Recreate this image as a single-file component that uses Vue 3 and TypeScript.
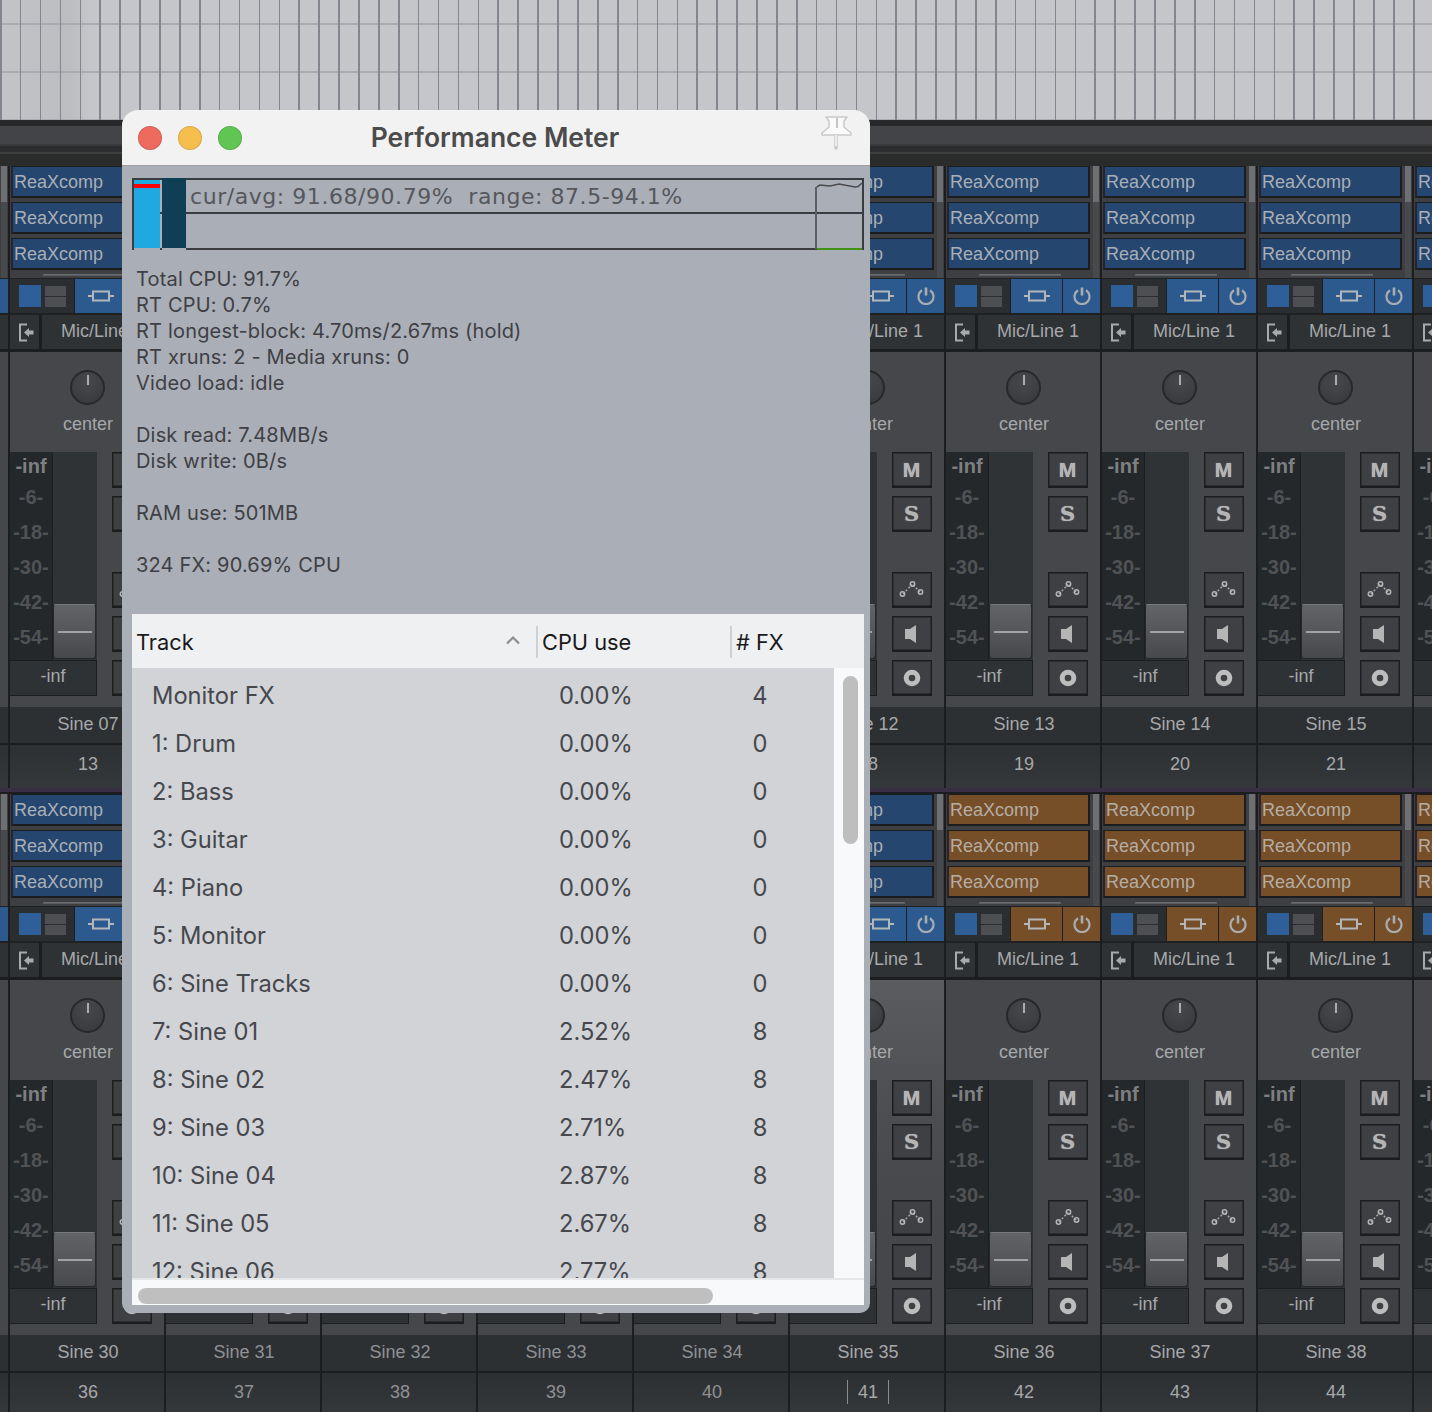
<script setup lang="ts">
interface Strip {
  name: string
  num: number
  brown: boolean
  dim: boolean
  sel: boolean
}

const pad = (n: number): string => String(n).padStart(2, '0')

function buildRow(first: number, brownFrom: number): Strip[] {
  const out: Strip[] = []
  for (let i = 0; i < 11; i++) {
    const n = first + i
    out.push({
      name: 'Sine ' + pad(n),
      num: n + 6,
      brown: n >= brownFrom,
      dim: n >= 31 && n <= 34,
      sel: n === 35,
    })
  }
  return out
}

const rows: Strip[][] = [buildRow(6, 999), buildRow(29, 36)]
const scale = ['-6-', '-18-', '-30-', '-42-', '-54-']
const meterText = 'cur/avg: 91.68/90.79%  range: 87.5-94.1%'

const stats: string[] = [
  'Total CPU: 91.7%',
  'RT CPU: 0.7%',
  'RT longest-block: 4.70ms/2.67ms (hold)',
  'RT xruns: 2 - Media xruns: 0',
  'Video load: idle',
  '',
  'Disk read: 7.48MB/s',
  'Disk write: 0B/s',
  '',
  'RAM use: 501MB',
  '',
  '324 FX: 90.69% CPU',
]

const tracks: [string, string, number][] = [
  ['Monitor FX', '0.00%', 4],
  ['1: Drum', '0.00%', 0],
  ['2: Bass', '0.00%', 0],
  ['3: Guitar', '0.00%', 0],
  ['4: Piano', '0.00%', 0],
  ['5: Monitor', '0.00%', 0],
  ['6: Sine Tracks', '0.00%', 0],
  ['7: Sine 01', '2.52%', 8],
  ['8: Sine 02', '2.47%', 8],
  ['9: Sine 03', '2.71%', 8],
  ['10: Sine 04', '2.87%', 8],
  ['11: Sine 05', '2.67%', 8],
  ['12: Sine 06', '2.77%', 8],
]
</script>

<template>
  <div class="root">
    <div class="arrange"></div>
    <div class="topbar">
      <div class="tb-a"></div>
      <div class="tb-b"></div>
      <div class="tb-c"></div>
      <div class="tb-d"></div>
      <div class="tb-e"></div>
    </div>

    <div v-for="(row, ri) in rows" :key="ri" class="mixrow">
      <div v-for="s in row" :key="s.name" class="strip" :class="{ brown: s.brown, dim: s.dim, sel: s.sel }">
        <div class="fxarea">
          <div class="chips">
            <div class="chip">ReaXcomp</div>
            <div class="chip">ReaXcomp</div>
            <div class="chip">ReaXcomp</div>
            <div class="hbar"></div>
          </div>
          <div class="vbar"><div class="vthumb"></div></div>
        </div>

        <div class="btnrow">
          <div class="layout">
            <div class="sq"></div>
            <div class="sq2"><i></i><i></i></div>
          </div>
          <div class="fxbtn">
            <svg width="26" height="12" viewBox="0 0 26 12">
              <path d="M0 6h5M21 6h5" stroke="#b4b7ba" stroke-width="2" fill="none" />
              <rect x="5" y="1.5" width="16" height="9" stroke="#b4b7ba" stroke-width="2" fill="none" />
            </svg>
          </div>
          <div class="pwr">
            <svg width="18" height="18" viewBox="0 0 18 18">
              <path d="M5 3.200A7.500 7.500 0 1 0 13 3.200" stroke="#a9adb1" stroke-width="2.200" fill="none" />
              <path d="M9 0.500v8" stroke="#a9adb1" stroke-width="2.600" fill="none" />
            </svg>
          </div>
        </div>

        <div class="inputrow">
          <div class="inicon">
            <svg width="16" height="19" viewBox="0 0 16 19">
              <path d="M9 1.500H2V17.500H9" stroke="#a8aaad" stroke-width="2" fill="none" />
              <path d="M6 9.500L11 5V7.500H15.500V11.500H11V14Z" fill="#a8aaad" />
            </svg>
          </div>
          <div class="inlabel">Mic/Line 1</div>
        </div>

        <div class="panarea">
          <div class="knob"><i></i></div>
          <div class="panlabel">center</div>
          <div class="channel">
            <div class="meter">
              <div class="meter-top">
                <div class="scale">
                  <div class="inf">-inf</div>
                  <div v-for="t in scale" :key="t" class="tick">{{ t }}</div>
                </div>
                <div class="track">
                  <div class="handle"><i></i></div>
                </div>
              </div>
              <div class="valbox">-inf</div>
            </div>
            <div class="btns">
              <div class="bt"><b class="m">M</b></div>
              <div class="bt"><b class="s">S</b></div>
              <div class="bt gapped">
                <svg width="40" height="36" viewBox="0 0 40 36">
                  <path d="M11 22L20 12.500M21 13L28 20" stroke="#a8a8a8" stroke-width="1.500" stroke-dasharray="2 2" fill="none" />
                  <circle cx="10.500" cy="22" r="2.200" stroke="#b5b5b5" stroke-width="1.500" fill="none" />
                  <circle cx="20.500" cy="12" r="2.200" stroke="#b5b5b5" stroke-width="1.500" fill="none" />
                  <circle cx="28.500" cy="20" r="2.200" stroke="#b5b5b5" stroke-width="1.500" fill="none" />
                </svg>
              </div>
              <div class="bt">
                <svg width="40" height="36" viewBox="0 0 40 36">
                  <path d="M13 13H18L24 9V27L18 23H13Z" fill="#b5b5b5" />
                </svg>
              </div>
              <div class="bt">
                <svg width="40" height="36" viewBox="0 0 40 36">
                  <circle cx="20" cy="18" r="5.800" stroke="#bdbdbd" stroke-width="5" fill="none" />
                </svg>
              </div>
            </div>
          </div>
        </div>

        <div class="name">{{ s.name }}</div>
        <div class="num"><span :class="{ mark: s.sel }">{{ s.num }}</span></div>
      </div>
    </div>

    <div class="win">
      <div class="titlebar">
        <div class="lights">
          <i class="red"></i><i class="yellow"></i><i class="green"></i>
        </div>
        <div class="title">Performance Meter</div>
        <svg class="pin" width="32" height="38" viewBox="0 0 32 38">
          <path d="M5 4H26L23 8V14L30 20V22H1V20L8 14V8Z" fill="#fafafa" stroke="#c9c9c9" stroke-width="1.500" stroke-linejoin="round" />
          <path d="M15 23V35" stroke="#c8c8c8" stroke-width="3.500" stroke-linecap="round" />
          <path d="M15 22V33" stroke="#fafafa" stroke-width="1.500" />
          <path d="M16 5V15" stroke="#b5b5b5" stroke-width="1.500" />
        </svg>
      </div>

      <div class="body">
        <div class="graph">
          <div class="g-bar"><div class="g-red"></div></div>
          <div class="g-sep"><i></i></div>
          <div class="g-dark"></div>
          <div class="g-main">
            <div class="g-top">{{ meterText }}</div>
            <div class="g-bot"></div>
          </div>
          <svg class="spark" width="50" height="72" viewBox="0 0 50 72">
            <path d="M2 71V9" stroke="#5d5f64" stroke-width="2" fill="none" />
            <path d="M2.700 9L6 7L16 8L25 6L41 9L44 8.500L48 5" stroke="#4a4c50" stroke-width="1.500" fill="none" />
            <path d="M3 71H48" stroke="#3f9216" stroke-width="2" />
          </svg>
        </div>

        <div class="stats">
          <div v-for="(l, i) in stats" :key="i" class="stat">{{ l }}</div>
        </div>

        <div class="table">
          <div class="thead">
            <div class="th th-track">Track
              <svg class="chev" width="16" height="10" viewBox="0 0 16 10">
                <path d="M2 8.500L8 2.500L14 8.500" stroke="#8e8e8e" stroke-width="2.200" fill="none" />
              </svg>
            </div>
            <div class="th th-cpu">CPU use</div>
            <div class="th th-fx"># FX</div>
          </div>
          <div class="tmain">
            <div class="tbody">
              <div v-for="t in tracks" :key="t[0]" class="tr">
                <div class="td1">{{ t[0] }}</div>
                <div class="td2">{{ t[1] }}</div>
                <div class="td3">{{ t[2] }}</div>
              </div>
            </div>
            <div class="vscroll"><div class="vs-thumb"></div></div>
          </div>
          <div class="hscroll"><div class="hs-thumb"></div></div>
        </div>
      </div>
    </div>
  </div>
</template>

<style>
html,
body {
  margin: 0;
  background: #1c1d1f;
}
</style>

<style scoped>
.root {
  position: relative;
  width: 1432px;
  height: 1412px;
  overflow: hidden;
  background: #1c1d1f;
  font-family: "Liberation Sans", Arial, sans-serif;
}
.arrange {
  height: 120px;
  background-color: #c3c5c9;
  background-image:
    repeating-linear-gradient(90deg, #84858e 0 1.6px, transparent 1.6px 19.9px),
    repeating-linear-gradient(180deg, transparent 0 23px, #a9aab0 23px 25px, transparent 25px 71px, #a9aab0 71px 73px, transparent 73px 119px, #a9aab0 119px 121px),
    linear-gradient(90deg, #c2c4c8 0, #bbbdc1 70px, #c4c6ca 90px, #c4c6ca 100%);
}
.topbar {
  height: 46px;
  display: flex;
  flex-direction: column;
}
.tb-a { height: 6px; background: #26282a; }
.tb-b { height: 18px; background: #424447; }
.tb-c { height: 2px; background: #37393c; }
.tb-d { height: 6px; background: #2b2d2f; }
.tb-e { height: 14px; background: #2a2c2c; border-top: 2px solid #3c3e40; box-sizing: border-box; }

.mixrow {
  display: flex;
  margin-left: -148px;
  width: 1716px;
  padding-bottom: 6px;
  background: linear-gradient(180deg, transparent 0 621px, #1c1d1f 621px 622px, #3a2e44 622px 626px, #1c1d1f 626px 628px);
}
.strip {
  flex: none;
  width: 156px;
  box-sizing: border-box;
  border-left: 2px solid #1c1d1f;
  display: flex;
  flex-direction: column;
  color: #a6a8aa;
  font-size: 18px;
}
.fxarea {
  height: 112px;
  display: flex;
  background: #3d3f42;
}
.chips {
  position: relative;
  width: 143px;
  padding-left: 1px;
  display: flex;
  flex-direction: column;
  gap: 4px;
}
.chip {
  height: 32px;
  box-sizing: border-box;
  border: 2px solid #1b1c1e;
  border-top-width: 1px;
  border-left-color: #2b2231;
  background: #25466f;
  color: #a9afb6;
  line-height: 30px;
  padding-left: 1px;
}
.brown .chip {
  background: #764e27;
  color: #b4ada4;
}
.hbar {
  height: 2px;
  width: 82px;
  margin-left: 32px;
  border: 1px solid #5a5c5f;
  border-top-color: #6a6c6f;
  box-sizing: border-box;
}
.vbar {
  width: 6px;
  margin-left: 3px;
  background: #47494c;
}
.vthumb {
  height: 36px;
  background: #6d6f72;
}
.btnrow {
  height: 37px;
  padding: 1px 0 2px;
  box-sizing: border-box;
  display: flex;
  gap: 1px;
  background: #1f2022;
}
.layout {
  width: 64px;
  background: #2b2e30;
  display: flex;
  align-items: center;
  padding-left: 9px;
  box-sizing: border-box;
  gap: 4px;
}
.sq {
  width: 22px;
  height: 22px;
  background: #2e5f99;
}
.sq2 {
  display: flex;
  flex-direction: column;
  gap: 1px;
}
.sq2 i {
  display: block;
  width: 21px;
  height: 10px;
  background: #4d4f52;
}
.fxbtn,
.pwr {
  display: flex;
  align-items: center;
  justify-content: center;
  background: #2c5a8e;
}
.fxbtn { width: 51px; }
.pwr { width: 37px; }
.brown .fxbtn,
.brown .pwr { background: #764e27; }
.inputrow {
  height: 35px;
  display: flex;
  gap: 3px;
  padding-bottom: 1px;
  box-sizing: border-box;
  margin-bottom: 2px;
}
.inicon {
  width: 29px;
  box-sizing: border-box;
  padding-left: 2px;
  background: #2e3235;
  display: flex;
  align-items: center;
  justify-content: center;
}
.inlabel {
  flex: 1;
  box-sizing: border-box;
  padding-right: 2px;
  background: #2e3235;
  text-align: center;
  line-height: 33px;
}
.panarea {
  height: 355px;
  box-sizing: border-box;
  padding-top: 18px;
  display: flex;
  flex-direction: column;
  background: #45474a;
}
.sel .panarea {
  background: linear-gradient(180deg, #5a5c5f 0, #4b4d50 140px, #45474a 240px);
}
.knob {
  position: relative;
  width: 35px;
  height: 35px;
  box-sizing: border-box;
  margin-left: 60px;
  border-radius: 50%;
  border: 2px solid #26282a;
  background: radial-gradient(circle at 50% 30%, #46484b, #36383b);
}
.knob i {
  position: absolute;
  left: 14.5px;
  top: 3px;
  width: 2.5px;
  height: 10px;
  background: #a9abad;
}
.panlabel {
  margin-top: 7px;
  height: 24px;
  line-height: 24px;
  text-align: center;
  width: 154px;
  box-sizing: border-box;
  padding-left: 2px;
}
.channel {
  margin-top: 16px;
  display: flex;
}
.meter {
  width: 87px;
  background: #1c1d1f;
}
.meter-top {
  height: 208px;
  display: flex;
}
.scale {
  width: 42px;
  background: #25282a;
  margin-right: 1px;
  text-align: center;
  font-weight: 700;
  color: #505255;
  font-size: 20px;
}
.inf {
  height: 28px;
  line-height: 28px;
  font-size: 20px;
  color: #7d7f82;
}
.tick {
  height: 35px;
  line-height: 35px;
}
.track {
  width: 44px;
  background: #2f3335;
  display: flex;
  flex-direction: column;
  justify-content: flex-end;
  padding-bottom: 1px;
  box-sizing: border-box;
}
.handle {
  height: 55px;
  box-sizing: border-box;
  margin: 0 1px 0 0;
  border-radius: 3px;
  border: 1px solid #26282a;
  border-top-color: #777a7d;
  background: linear-gradient(180deg, #616367, #47494c);
  display: flex;
  align-items: center;
  justify-content: center;
}
.handle i {
  display: block;
  width: 34px;
  height: 2px;
  background: #a0a2a5;
}
.valbox {
  margin-top: 1px;
  height: 34px;
  margin-right: 1px;
  background: #2e3235;
  text-align: center;
  line-height: 30px;
  color: #a6a8aa;
}
.btns {
  margin-left: 15px;
  display: flex;
  flex-direction: column;
  gap: 8px;
}
.bt {
  width: 40px;
  height: 36px;
  background: #3e4043;
  box-shadow: inset 0 0 0 1.5px #1c1d1f, inset 0 -2.5px 0 #1c1d1f;
  display: flex;
  align-items: center;
  justify-content: center;
}
.bt.gapped {
  margin-top: 32px;
}
.bt b {
  color: #b5b5b5;
  font-size: 21px;
  margin-top: -1px;
  margin-left: -1px;
  text-shadow: 0 0 1px #b5b5b5;
}
.bt .s {
  font-family: "DejaVu Serif", "Liberation Serif", serif;
}
.name {
  height: 36px;
  background: #2d3033;
  text-align: center;
  line-height: 34px;
  margin-bottom: 2px;
  width: 154px;
  box-sizing: border-box;
  padding-left: 2px;
}
.num {
  height: 43px;
  background: linear-gradient(180deg, #2d3033, #35383b);
  text-align: center;
  line-height: 38px;
  width: 154px;
  box-sizing: border-box;
  padding-left: 2px;
}
.dim .name,
.dim .num { color: #8f9193; }
.mark {
  display: inline-block;
  height: 24px;
  line-height: 24px;
  padding: 0 10px;
  border-left: 1px solid #8a8c8e;
  border-right: 1px solid #8a8c8e;
}

.win {
  position: absolute;
  left: 122px;
  top: 110px;
  width: 748px;
  height: 1203px;
  box-sizing: border-box;
  border-radius: 16px 16px 10px 10px;
  overflow: hidden;
  background: #aaaeb6;
  font-family: Inter, "Noto Sans", sans-serif;
}
.titlebar {
  position: relative;
  height: 56px;
  box-sizing: border-box;
  background: #f2f2f2;
  border-bottom: 1px solid #9fa1a7;
  display: flex;
  align-items: center;
  justify-content: center;
}
.lights {
  position: absolute;
  left: 16px;
  top: 16px;
  display: flex;
  gap: 16px;
}
.lights i {
  display: block;
  width: 24px;
  height: 24px;
  box-sizing: border-box;
  border-radius: 50%;
  border: 1px solid rgba(0, 0, 0, 0.12);
}
.red { background: #ee6a5f; }
.yellow { background: #f6be4f; }
.green { background: #61c554; }
.title {
  font-size: 26.5px;
  font-weight: 600;
  color: #4b4b4b;
  margin-top: -1px;
  margin-left: -2px;
}
.pin {
  position: absolute;
  right: 17px;
  top: 3px;
}
.body {
  padding: 12px 6px 0 10px;
}
.graph {
  position: relative;
  height: 72px;
  box-sizing: border-box;
  display: flex;
  padding-left: 2px;
  background: linear-gradient(90deg, #3a3c40 0 2px, transparent 2px);
}
.g-bar {
  width: 26px;
  box-sizing: border-box;
  border-top: 2px solid #3a3c40;
  background: #1fa9e0;
  margin-bottom: 2px;
  padding-top: 4px;
}
.g-red {
  height: 4px;
  background: #fb0007;
}
.g-sep {
  width: 2px;
  padding-top: 34px;
  box-sizing: border-box;
  border-top: 2px solid #3a3c40;
  border-bottom: 2px solid #3a3c40;
}
.g-sep i {
  display: block;
  height: 2px;
  margin-top: -2px;
  background: #3a3c40;
}
.g-dark {
  width: 24px;
  background: #0f3f55;
  margin-bottom: 2px;
}
.g-main {
  flex: 1;
  box-sizing: border-box;
  border: 2px solid #3a3c40;
  border-left: 0;
  display: flex;
  flex-direction: column;
}
.g-top {
  height: 34px;
  box-sizing: border-box;
  border-bottom: 2px solid #3a3c40;
  padding-left: 4px;
  font-family: "DejaVu Sans", sans-serif;
  font-size: 22px;
  line-height: 34px;
  white-space: pre;
  color: #55575c;
  letter-spacing: 0.55px;
}
.spark {
  position: absolute;
  right: 0;
  top: 0;
}
.stats {
  margin-top: 16px;
  padding-left: 4px;
}
.stat {
  height: 26px;
  line-height: 26px;
  font-size: 20px;
  letter-spacing: 0.18px;
  color: #3e4045;
  white-space: pre;
}
.table {
  margin-top: 36px;
  width: 732px;
  background: #f8f9fa;
}
.thead {
  height: 54px;
  display: flex;
  background: #eff0f2;
  align-items: center;
  color: #1a1a1a;
  font-size: 21.8px;
}
.th {
  box-sizing: border-box;
  height: 32px;
  line-height: 32px;
  position: relative;
  padding-left: 4px;
  margin-top: 2px;
}
.th-track { width: 404px; }
.th-cpu { width: 194px; border-left: 2px solid #cfd0d3; padding-left: 4px; }
.th-fx { flex: 1; border-left: 2px solid #cfd0d3; padding-left: 4px; }
.chev {
  position: absolute;
  right: 15px;
  top: 9px;
}
.tmain {
  display: flex;
  height: 610px;
}
.tbody {
  width: 702px;
  height: 610px;
  overflow: hidden;
  background: #d1d3d7;
  padding-top: 4px;
  box-sizing: border-box;
  color: #46484d;
  font-size: 23.7px;
}
.tr {
  height: 48px;
  display: flex;
  align-items: center;
  line-height: 48px;
}
.td1 { width: 427px; padding-left: 20px; box-sizing: border-box; }
.td2 { width: 172px; }
.td3 { width: 58px; text-align: center; }
.vscroll {
  flex: 1;
  padding: 8px 6px 0 9px;
}
.vs-thumb {
  height: 168px;
  border-radius: 8px;
  background: #bebebe;
}
.hscroll {
  height: 27px;
  box-sizing: border-box;
  padding: 8px 0 0 6px;
  border-top: 2px solid #e6e7e9;
}
.hs-thumb {
  width: 575px;
  height: 16px;
  border-radius: 8px;
  background: #bfbfbf;
}
</style>
